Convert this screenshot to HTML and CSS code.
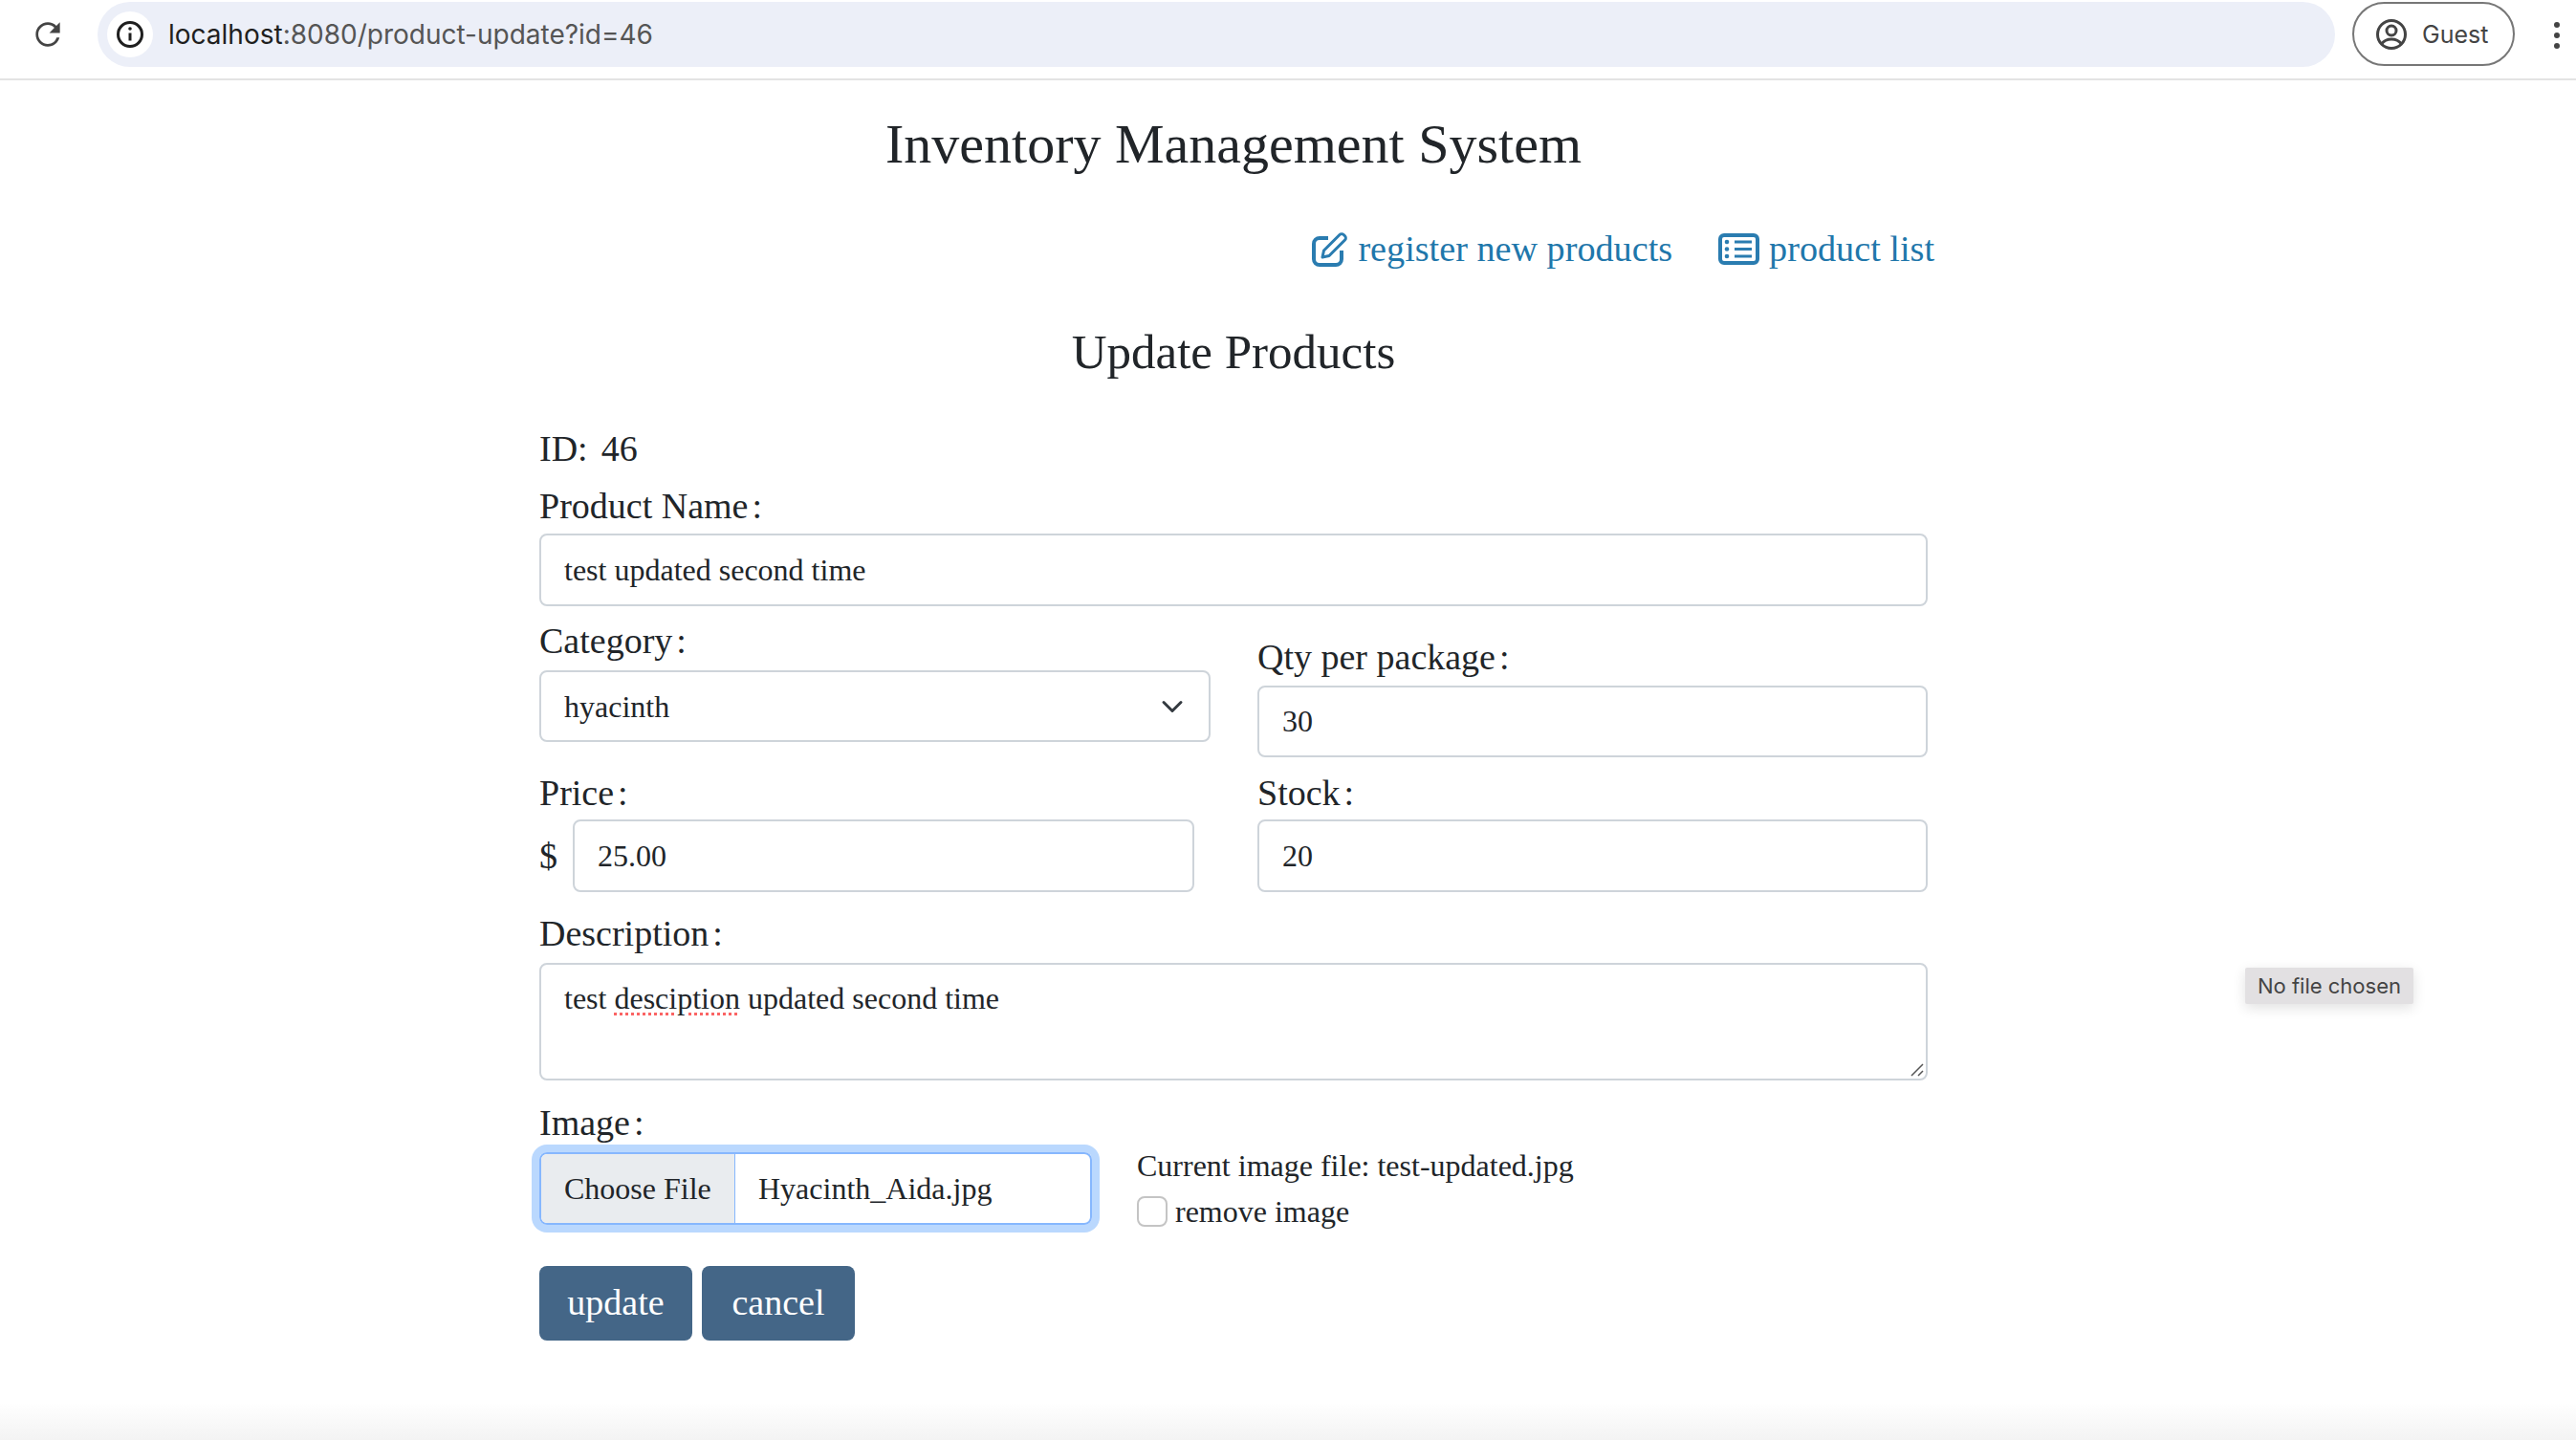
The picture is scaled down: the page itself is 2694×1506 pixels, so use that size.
FILE: index.html
```html
<!DOCTYPE html>
<html>
<head>
<meta charset="utf-8">
<title>Inventory Management System</title>
<link rel="stylesheet" href="styles.css">
</head>
<body>
  <div class="browser-bar">
    <svg class="reload" viewBox="0 0 24 24"><path d="M17.65 6.35A7.958 7.958 0 0 0 12 4c-4.42 0-7.99 3.58-7.99 8s3.57 8 7.99 8c3.73 0 6.84-2.55 7.73-6h-1.9A6.2 6.2 0 0 1 12 18.3c-3.45 0-6.3-2.85-6.3-6.3S8.55 5.7 12 5.7c1.72 0 3.24.72 4.36 1.84L13 11h7V4l-2.35 2.35z"/></svg>
    <div class="address">
      <span class="site-info">
        <svg viewBox="0 0 30 30"><circle cx="15" cy="15" r="12.5"/><path d="M15 13.5v8"/><circle class="dot" cx="15" cy="9" r="1.8"/></svg>
      </span>
      <span class="url"><b>localhost</b>:8080/product-update?id=46</span>
    </div>
    <div class="guest">
      <svg viewBox="0 0 34 34"><circle cx="17" cy="17" r="14.5"/><circle cx="17" cy="13" r="5"/><path d="M6.5 27c3-4 6.500-5 10.500-5s7.500 1 10.500 5"/></svg>
      <span>Guest</span>
    </div>
    <div class="dots"><i></i><i></i><i></i></div>
  </div>

  <div class="page">
    <h1>Inventory Management System</h1>
    <div class="links">
      <a href="#">
        <svg class="icon-edit" viewBox="0 0 38 37"><path d="M17 7H8a6 6 0 0 0-6 6v16a6 6 0 0 0 6 6h17a6 6 0 0 0 6-6v-9"/><path class="thin" d="M11 27l1.500-7L29 3.500a3 3 0 0 1 4.200 0l1.300 1.300a3 3 0 0 1 0 4.200L18 25.500z"/></svg>
        register new products
      </a>
      <a href="#">
        <svg class="icon-list" viewBox="0 0 43 33"><rect x="2" y="2" width="39" height="29" rx="4"/><path class="thin" d="M17 9h18M17 16.500h18M17 24h18"/><circle cx="9" cy="9" r="2.300"/><circle cx="9" cy="16.500" r="2.300"/><circle cx="9" cy="24" r="2.300"/></svg>
        product list
      </a>
    </div>
    <h2>Update Products</h2>

    <form action="#">
      <div class="id-row">ID:<span class="id-value">46</span></div>

      <label class="name-label">Product Name<span class="colon">:</span></label>
      <input class="field" type="text" value="test updated second time">

      <div class="columns">
        <div class="category-col">
          <label>Category<span class="colon">:</span></label>
          <select class="field picker"><option>hyacinth</option></select>
        </div>
        <div class="qty-col">
          <label>Qty per package<span class="colon">:</span></label>
          <input class="field" type="text" value="30">
        </div>
        <div class="price-col">
          <label>Price<span class="colon">:</span></label>
          <div class="price-row">
            <span class="currency">$</span>
            <input class="field" type="text" value="25.00">
          </div>
        </div>
        <div class="price-col">
          <label>Stock<span class="colon">:</span></label>
          <input class="field" type="text" value="20">
        </div>
      </div>

      <label class="desc-label">Description<span class="colon">:</span></label>
      <div class="field desc">test <span class="misspelled">desciption</span> updated second time
        <svg class="grip" viewBox="0 0 14 14"><path d="M1 13L13 1M8 13l5-5"/></svg>
      </div>

      <label class="image-label">Image<span class="colon">:</span></label>
      <div class="image-row">
        <div class="file-box">
          <span class="file-btn">Choose File</span>
          <span class="file-name">Hyacinth_Aida.jpg</span>
        </div>
        <div class="current">
          <div class="current-name">Current image file: test-updated.jpg</div>
          <div class="remove"><input type="checkbox"><span>remove image</span></div>
        </div>
      </div>

      <div class="actions">
        <button type="button" class="btn">update</button>
        <button type="button" class="btn">cancel</button>
      </div>
    </form>
  </div>

  <div class="file-tip">No file chosen</div>
  <div class="bottom-fade"></div>
</body>
</html>
```

FILE: styles.css
```css
* {
  box-sizing: border-box;
}

html, body {
  margin: 0;
  height: 1506px;
  overflow: hidden;
}

body {
  background: #fff;
  color: #212529;
  font-family: "Liberation Serif", "Times New Roman", serif;
  font-size: 32px;
}

/* browser chrome */
.browser-bar {
  display: flex;
  align-items: flex-start;
  height: 84px;
  border-bottom: 2px solid #e3e3e3;
  font-family: Inter, Roboto, sans-serif;
}

.reload {
  width: 38px;
  height: 38px;
  margin: 17px 33px 0 31px;
  fill: #444;
}

.address {
  display: flex;
  align-items: center;
  width: 2340px;
  height: 68px;
  margin-top: 2px;
  padding-left: 10px;
  border-radius: 34px;
  background: #eceff8;
}

.site-info {
  display: flex;
  align-items: center;
  justify-content: center;
  width: 48px;
  height: 48px;
  border-radius: 50%;
  background: #fff;
}

.site-info svg {
  width: 30px;
  height: 30px;
  fill: none;
  stroke: #1f1f1f;
  stroke-width: 3;
}

.site-info .dot {
  fill: #1f1f1f;
  stroke: none;
}

.url {
  margin-left: 16px;
  font-size: 28px;
  color: #555;
}

.url b {
  font-weight: 400;
  color: #1f1f1f;
}

.guest {
  display: flex;
  align-items: center;
  width: 170px;
  height: 67px;
  margin: 2px 0 0 18px;
  padding-left: 22px;
  border: 2px solid #777;
  border-radius: 34px;
  font-size: 25px;
  color: #444;
}

.guest svg {
  width: 34px;
  height: 34px;
  margin-right: 15px;
  fill: none;
  stroke: #444;
  stroke-width: 3;
}

.dots {
  display: flex;
  flex-direction: column;
  gap: 5px;
  margin: 23px 0 0 41px;
}

.dots i {
  width: 6px;
  height: 6px;
  border-radius: 50%;
  background: #444;
}

/* page */
.page {
  width: 1452px;
  margin-left: 564px;
}

h1 {
  margin: 32px 0 0;
  font-size: 58px;
  font-weight: 400;
  line-height: 70px;
  text-align: center;
}

.links {
  display: flex;
  justify-content: flex-end;
  gap: 48px;
  margin: 51px -7px 0 0;
  font-size: 38.2px;
  line-height: 46px;
}

.links a {
  display: flex;
  align-items: center;
  color: #1f77ab;
  text-decoration: none;
}

.links svg {
  fill: none;
  stroke: #2a7cb0;
  stroke-width: 4;
  stroke-linejoin: round;
}

.links .thin {
  stroke-width: 3;
}

.links circle {
  fill: #2a7cb0;
  stroke: none;
}

.icon-edit {
  width: 38px;
  height: 37px;
  margin-right: 10px;
}

.icon-list {
  width: 43px;
  height: 33px;
  margin-right: 10px;
}

h2 {
  margin: 55px 0 0;
  font-size: 51px;
  font-weight: 400;
  line-height: 60px;
  text-align: center;
}

/* form */
label, .id-row {
  display: block;
  font-size: 38px;
  line-height: 46px;
  margin-bottom: 8px;
}

.id-row {
  margin: 48px 0 0;
}

.id-value {
  margin-left: 14px;
}

.colon {
  margin-left: 4px;
}

.name-label {
  margin-top: 14px;
  margin-bottom: 6px;
}

.field {
  display: block;
  width: 100%;
  height: 76px;
  padding: 0 24px;
  border: 2px solid #ced4da;
  border-radius: 8px;
  background: #fff;
  color: #212529;
  font-family: inherit;
  font-size: 32px;
  outline: none;
}

.picker {
  height: 75px;
  appearance: none;
  background-image: url("data:image/svg+xml,%3Csvg xmlns='http://www.w3.org/2000/svg' viewBox='0 0 16 16'%3E%3Cpath fill='none' stroke='%23343a40' stroke-linecap='round' stroke-linejoin='round' stroke-width='2' d='m2 5 6 6 6-6'/%3E%3C/svg%3E");
  background-repeat: no-repeat;
  background-position: right 26px center;
  background-size: 24px 24px;
}

.columns {
  display: grid;
  grid-template-columns: 702px 701px;
  column-gap: 49px;
}

.category-col {
  padding-top: 13px;
}

.qty-col {
  padding-top: 30px;
}

.qty-col label {
  margin-bottom: 7px;
}

.qty-col .field {
  height: 75px;
}

.price-col {
  padding-top: 14px;
}

.price-col label {
  margin-bottom: 5px;
}

.price-row {
  display: flex;
  align-items: center;
  gap: 16px;
  padding-right: 17px;
}

.currency {
  font-size: 38px;
}

.desc-label {
  margin-top: 20px;
}

.desc {
  position: relative;
  height: 123px;
  padding-top: 16px;
  line-height: 38px;
}

.grip {
  position: absolute;
  right: 2px;
  bottom: 2px;
  width: 14px;
  height: 14px;
  fill: none;
  stroke: #555;
  stroke-width: 1.5;
}

.misspelled {
  text-decoration: underline dotted #fa6464 3px;
  text-underline-offset: 4px;
}

.image-label {
  margin-top: 21px;
}

.image-row {
  display: flex;
  gap: 47px;
}

.file-box {
  display: flex;
  width: 578px;
  height: 76px;
  border: 2px solid #86b7fe;
  border-radius: 8px;
  box-shadow: 0 0 0 8px #bad8fe;
  line-height: 72px;
}

.file-btn {
  width: 203px;
  padding-left: 24px;
  border-right: 1px solid #86b7fe;
  border-radius: 6px 0 0 6px;
  background: #e9ecef;
}

.file-name {
  padding-left: 24px;
}

.current {
  margin-top: -2px;
}

.current-name {
  line-height: 32px;
}

.remove {
  display: flex;
  align-items: center;
  gap: 8px;
  margin-top: 16px;
  line-height: 32px;
}

.remove input {
  width: 32px;
  height: 32px;
  margin: 0;
  appearance: none;
  border: 2px solid #c4c4c4;
  border-radius: 8px;
  background: #fff;
}

.actions {
  display: flex;
  gap: 10px;
  margin-top: 41px;
}

.btn {
  width: 160px;
  height: 78px;
  padding: 0 0 3px;
  border: none;
  border-radius: 8px;
  background: #446687;
  color: #fff;
  font-family: inherit;
  font-size: 38px;
}

/* overlays */
.file-tip {
  position: absolute;
  left: 2348px;
  top: 1012px;
  width: 176px;
  height: 38px;
  border-radius: 2px;
  background: #e2e0e2;
  box-shadow: 0 4px 14px rgba(0, 0, 0, 0.12);
  color: #444;
  font-family: Inter, Roboto, sans-serif;
  font-size: 22px;
  line-height: 38px;
  text-align: center;
}

.bottom-fade {
  position: absolute;
  left: 0;
  top: 1467px;
  width: 100%;
  height: 39px;
  background: linear-gradient(#fff, #f3f3f3);
}
```
